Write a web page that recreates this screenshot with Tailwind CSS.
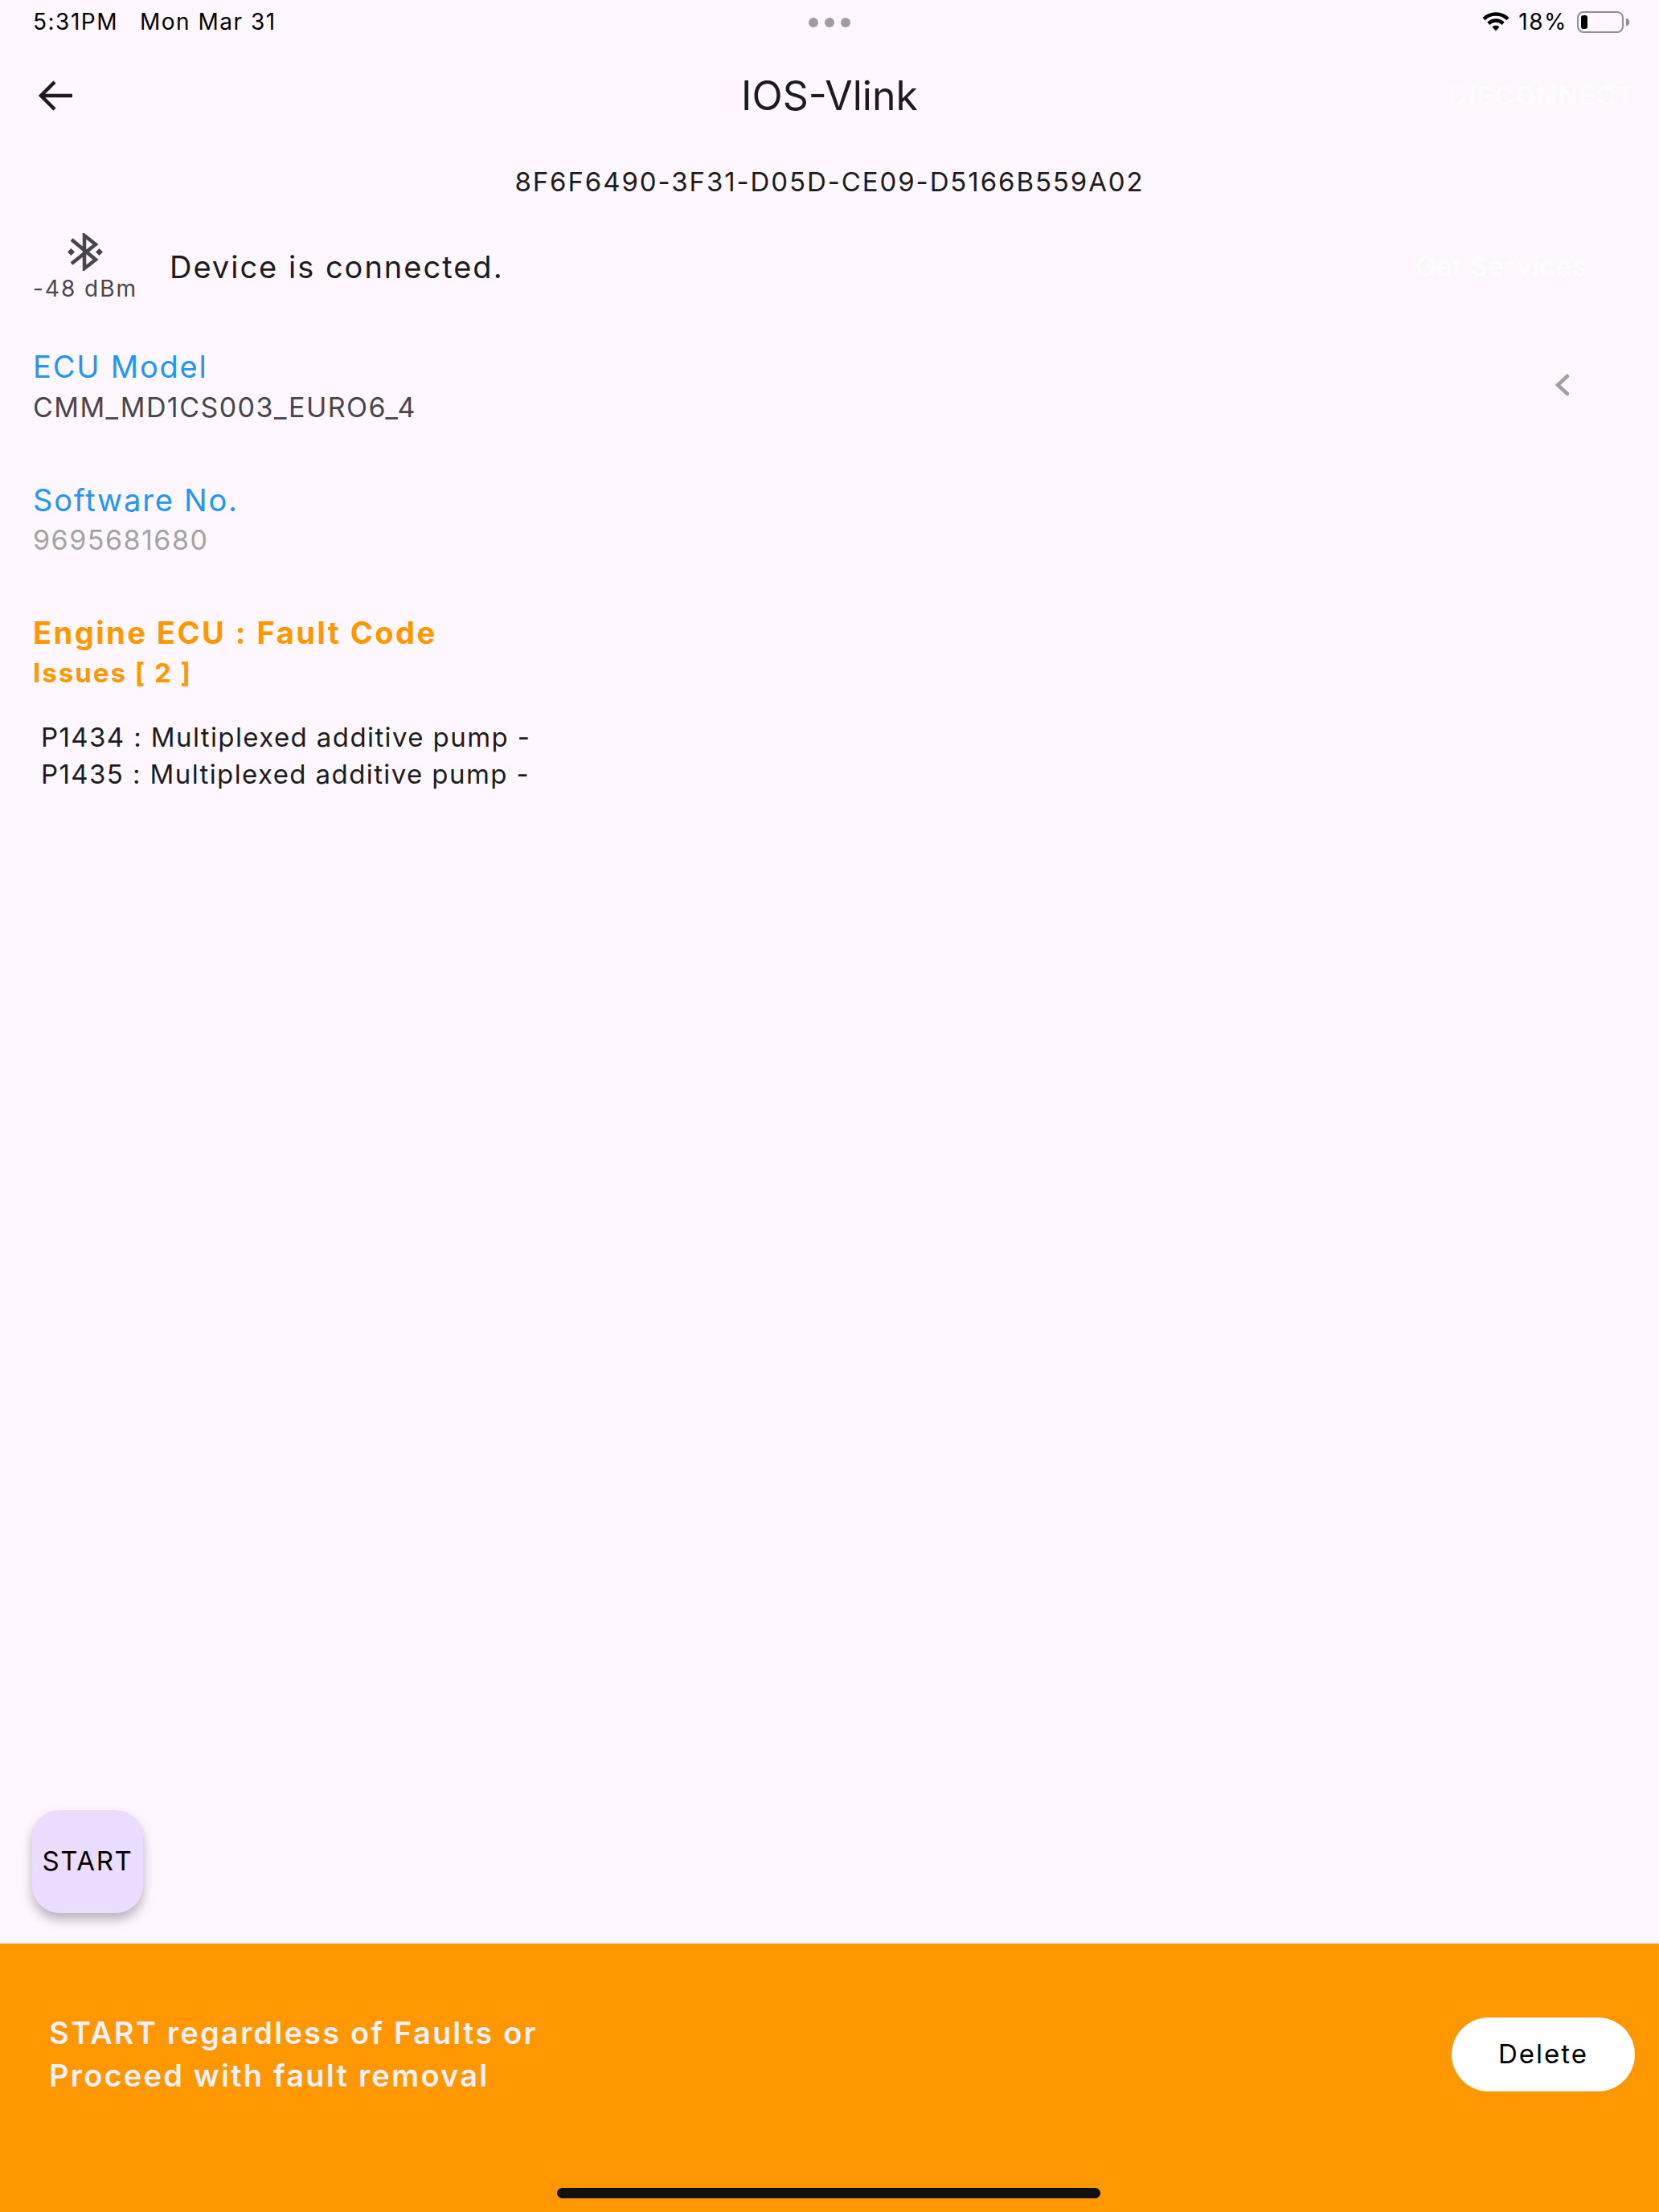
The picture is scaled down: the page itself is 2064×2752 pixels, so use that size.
<!DOCTYPE html>
<html lang="en">
<head>
    <meta charset="UTF-8" />
    <title>IOS-Vlink</title>
    <script src="https://cdn.jsdelivr.net/npm/@tailwindcss/browser@4"></script>
</head>
<body class="bg-[#fef7ff]">
    <div class="w-[2064px] h-[2752px] flex flex-col font-['Inter',sans-serif] text-[#1d1b20] overflow-hidden">

        <!-- status bar -->
        <div class="relative flex items-center justify-between h-[54px] pl-[41px] pr-[37px] text-[28px] tracking-[1.5px] text-black">
            <div class="flex gap-[27px]"><span>5:31PM</span><span>Mon Mar 31</span></div>
            <div class="absolute left-[1006px] top-[22px] flex gap-[8px]">
                <div class="w-[12px] h-[12px] rounded-full bg-[#a09ba3]"></div>
                <div class="w-[12px] h-[12px] rounded-full bg-[#a09ba3]"></div>
                <div class="w-[12px] h-[12px] rounded-full bg-[#a09ba3]"></div>
            </div>
            <div class="flex items-center">
                <svg class="w-[34px] h-[24px] mr-[11px]" viewBox="0 0 34 24" fill="none" stroke="black" stroke-width="4.6">
                    <path d="M2 8.6C10.500 0.500 23.500 0.500 32 8.600" />
                    <path d="M7.800 14.200C13.200 9.300 20.800 9.300 26.200 14.200" />
                    <path d="M12.500 18.500L17 23.500L21.500 18.500C18.800 16 15.200 16 12.500 18.500Z" fill="black" stroke="none" />
                </svg>
                <span>18%</span>
                <div class="ml-[12px] w-[58px] h-[27px] border-2 border-[#8e8e93] rounded-[8px] p-[3px]">
                    <div class="w-[8px] h-full bg-black rounded-[3px]"></div>
                </div>
                <div class="ml-[3px] w-[4px] h-[9px] bg-[#8e8e93] rounded-r-full"></div>
            </div>
        </div>

        <!-- app bar -->
        <div class="relative flex items-center justify-between h-[130px] pl-[46px] pr-[30px]">
            <svg class="w-[46px] h-[38px]" viewBox="0 0 46 38" fill="none" stroke="#1d1b20" stroke-width="4.500">
                <path d="M44 19H6" />
                <path d="M22 2L5 19L22 36" />
            </svg>
            <div class="absolute inset-x-0 text-center text-[50px] leading-none">IOS-Vlink</div>
            <div class="text-[33px] text-white font-medium tracking-[1.300px] pt-[2px]">DISCONNECT</div>
        </div>

        <div class="text-center text-[33px] leading-none tracking-[1.900px] mt-[26px]">8F6F6490-3F31-D05D-CE09-D5166B559A02</div>

        <!-- connection row -->
        <div class="flex items-center justify-between mt-[47px] pl-[41px] pr-[89px]">
            <div class="flex items-center">
                <div class="flex flex-col items-center w-[130px]">
                    <svg class="w-[44px] h-[47px]" viewBox="0 0 44 47" fill="none" stroke="#49454f" stroke-width="4.500">
                        <path d="M5 8L35 33L21 44V3L35 14L5 38" />
                        <path d="M4.500 19L9 23.500L4.500 28L0 23.500Z" fill="#49454f" stroke="none" />
                        <path d="M39.500 19L44 23.500L39.500 28L35 23.500Z" fill="#49454f" stroke="none" />
                    </svg>
                    <div class="text-[28px] leading-none text-[#49454f] tracking-[2px] mt-[8px] whitespace-nowrap">-48 dBm</div>
                </div>
                <div class="ml-[40px] text-[38px] leading-none tracking-[2px]">Device is connected.</div>
            </div>
            <div class="text-[33px] text-white font-medium tracking-[1px]">Get Services</div>
        </div>

        <!-- ECU model -->
        <div class="flex items-center justify-between mt-[64px] pl-[41px] pr-[110px]">
            <div>
                <div class="text-[38px] leading-none text-[#2196f3] tracking-[1.800px]">ECU Model</div>
                <div class="text-[34px] leading-none text-[#49454f] tracking-[1.450px] mt-[15px]">CMM_MD1CS003_EURO6_4</div>
            </div>
            <svg class="w-[20px] h-[30px] mb-[4px]" viewBox="0 0 20 30" fill="none" stroke="#a0a0a0" stroke-width="4.500" stroke-linecap="round">
                <path d="M16 4L4 15L16 26" />
            </svg>
        </div>

        <!-- software no -->
        <div class="pl-[41px] mt-[79px]">
            <div class="text-[38px] leading-none text-[#2196f3] tracking-[1.800px]">Software No.</div>
            <div class="text-[34px] leading-none text-[#a3a3a3] tracking-[1.500px] mt-[14px]">9695681680</div>
        </div>

        <!-- faults -->
        <div class="pl-[41px] mt-[79px]">
            <div class="text-[38px] leading-none font-bold text-[#ff9800] tracking-[2.500px]">Engine ECU : Fault Code</div>
            <div class="text-[33px] leading-none font-bold text-[#ff9800] tracking-[2px] mt-[15px]">Issues [ 2 ]</div>
        </div>
        <div class="pl-[51px] mt-[40px] text-[33px] leading-[46px] tracking-[1.400px]">
            <div>P1434 : Multiplexed additive pump -</div>
            <div>P1435 : Multiplexed additive pump -</div>
        </div>

        <!-- start fab -->
        <div class="mt-auto mb-[38px] ml-[40px] w-[138px] h-[128px] flex items-center justify-center rounded-[34px] bg-[#eaddff] text-[33px] text-black tracking-[1.600px] shadow-[0_8px_14px_rgba(0,0,0,0.28)]">START</div>

        <!-- snackbar -->
        <div class="relative h-[334px] bg-[#ff9800] flex items-start justify-between pl-[61px] pr-[30px] pt-[85px]">
            <div class="text-[38px] leading-[53px] font-semibold text-[#f5eff7] tracking-[2.200px]">START regardless of Faults or<br />Proceed with fault removal</div>
            <div class="mt-[7px] w-[228px] h-[92px] rounded-full bg-white flex items-center justify-center text-[33px] text-black tracking-[2px]">Delete</div>
            <div class="absolute left-[693px] top-[304px] w-[676px] h-[13px] rounded-full bg-[#111111]"></div>
        </div>
    </div>
</body>
</html>
